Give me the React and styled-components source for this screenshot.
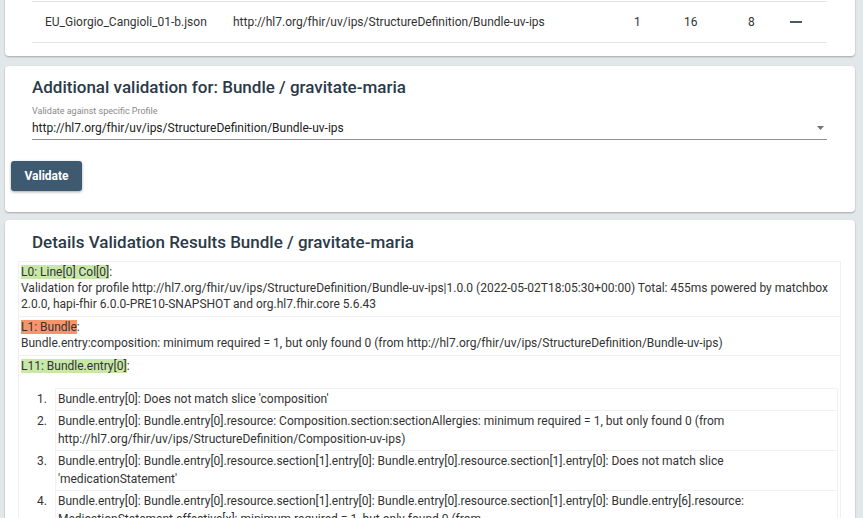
import React from 'react'
import styled, { createGlobalStyle } from 'styled-components'

const GlobalStyle = createGlobalStyle`
  html, body {
    margin: 0;
    padding: 0;
    background: #e2e7ea;
  }
  body {
    font-family: Roboto, "Liberation Sans", Arial, sans-serif;
    color: #333;
    overflow: hidden;
  }
`

const Page = styled.div`
  display: flex;
  flex-direction: column;
  padding: 0 8px 0 5px;
  margin-top: -20px;
`

const Card = styled.section`
  background: #fff;
  border-radius: 4px;
  box-shadow: 0 1px 2px rgba(0, 0, 0, 0.28);
  padding: ${p => p.$pad};
  margin-bottom: ${p => p.$gap || 0}px;
`

const TableRow = styled.div`
  display: grid;
  grid-template-columns: 188px 401px 50px 64px 42px 1fr;
  align-items: center;
  height: 40px;
  padding-left: 13px;
  border-top: 1px solid #e3e3e3;
  border-bottom: 1px solid #e3e3e3;
  font-size: 12px;
  color: #333;
`

const Dash = styled.span`
  display: block;
  width: 12px;
  height: 2px;
  background: #4a5b68;
`

const Heading = styled.h2`
  margin: 0 0 0 ${p => p.$indent || 0}px;
  font-size: 17px;
  line-height: 22px;
  font-weight: 500;
  color: #2b3a48;
`

const Form = styled.div`
  margin-left: 21px;
`

const Field = styled.div`
  margin-top: 8px;
`

const FieldLabel = styled.div`
  font-size: 9px;
  line-height: 11px;
  color: #8a8a8a;
`

const Select = styled.div`
  display: flex;
  align-items: center;
  justify-content: space-between;
  padding: 3px 0 3px;
  border-bottom: 1px solid #8f8f8f;
  font-size: 12px;
  line-height: 16px;
  color: #222;
`

const Caret = styled.svg`
  margin-right: 3px;
  flex: none;
`

const Button = styled.button`
  display: block;
  margin-top: 21px;
  width: 71px;
  height: 30px;
  border: none;
  border-radius: 3px;
  background: #3e5a70;
  color: #fff;
  font-family: Roboto, "Liberation Sans", Arial, sans-serif;
  font-size: 12px;
  font-weight: 700;
  box-shadow: 0 1px 3px rgba(0, 0, 0, 0.35);
  cursor: pointer;
`

const Results = styled.div`
  margin-top: 8px;
  display: flex;
  flex-direction: column;
`

const ResultRow = styled.div`
  border: 1px solid #f0f0f0;
  border-bottom: none;
  padding: 2px 2px 4px 2px;
  font-size: 12px;
  line-height: 16px;
  color: #333;
`

const Tag = styled.span`
  background: ${p => (p.$tone === 'error' ? '#f7956a' : '#c7e8a9')};
`

const List = styled.ol`
  list-style: none;
  margin: 14px 0 0 0;
  padding: 0;
  display: flex;
  flex-direction: column;
`

const Item = styled.li`
  display: flex;
`

const Num = styled.span`
  flex: none;
  width: 26px;
  padding: 2px 8px 0 0;
  text-align: right;
  line-height: 18px;
`

const ItemBox = styled.div`
  flex: 1;
  border: 1px solid #f2f2f2;
  border-bottom: none;
  padding: 1px 3px 2px 2px;
  line-height: 18px;
`

const url = 'http://hl7.org/fhir/uv/ips/StructureDefinition/Bundle-uv-ips'

const issues = [
  "Bundle.entry[0]: Does not match slice 'composition'",
  'Bundle.entry[0]: Bundle.entry[0].resource: Composition.section:sectionAllergies: minimum required = 1, but only found 0 (from http://hl7.org/fhir/uv/ips/StructureDefinition/Composition-uv-ips)',
  "Bundle.entry[0]: Bundle.entry[0].resource.section[1].entry[0]: Bundle.entry[0].resource.section[1].entry[0]: Does not match slice 'medicationStatement'",
  'Bundle.entry[0]: Bundle.entry[0].resource.section[1].entry[0]: Bundle.entry[0].resource.section[1].entry[0]: Bundle.entry[6].resource: MedicationStatement.effective[x]: minimum required = 1, but only found 0 (from http://hl7.org/fhir/uv/ips/StructureDefinition/MedicationStatement-uv-ips)',
]

export default function App() {
  return (
    <>
      <GlobalStyle />
      <Page>
        <Card $pad="21px 28px 13px 27px" $gap={10}>
          <TableRow>
            <span>EU_Giorgio_Cangioli_01-b.json</span>
            <span>{url}</span>
            <span>1</span>
            <span>16</span>
            <span>8</span>
            <Dash />
          </TableRow>
        </Card>

        <Card $pad="10px 28px 21px 6px" $gap={8}>
          <Form>
            <Heading>Additional validation for: Bundle / gravitate-maria</Heading>
            <Field>
              <FieldLabel>Validate against specific Profile</FieldLabel>
              <Select>
                <span>{url}</span>
                <Caret width="7" height="4" viewBox="0 0 7 4">
                  <path d="M0 0 L7 0 L3.5 4 Z" fill="#757575" />
                </Caret>
              </Select>
            </Field>
          </Form>
          <Button>Validate</Button>
        </Card>

        <Card $pad="11px 14px 0 13px">
          <Heading $indent={14}>Details Validation Results Bundle / gravitate-maria</Heading>
          <Results>
            <ResultRow>
              <Tag>L0: Line[0] Col[0]</Tag>:
              <div>
                Validation for profile {url}|1.0.0 (2022-05-02T18:05:30+00:00) Total: 455ms powered by
                matchbox 2.0.0, hapi-fhir 6.0.0-PRE10-SNAPSHOT and org.hl7.fhir.core 5.6.43
              </div>
            </ResultRow>
            <ResultRow>
              <Tag $tone="error">L1: Bundle</Tag>:
              <div>
                Bundle.entry:composition: minimum required = 1, but only found 0 (from {url})
              </div>
            </ResultRow>
            <ResultRow>
              <Tag>L11: Bundle.entry[0]</Tag>:
              <List>
                {issues.map((text, i) => (
                  <Item key={i}>
                    <Num>{i + 1}.</Num>
                    <ItemBox>{text}</ItemBox>
                  </Item>
                ))}
              </List>
            </ResultRow>
          </Results>
        </Card>
      </Page>
    </>
  )
}
